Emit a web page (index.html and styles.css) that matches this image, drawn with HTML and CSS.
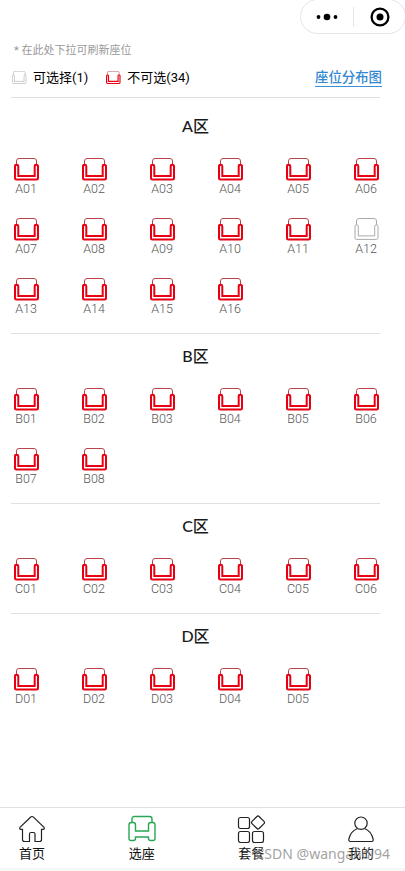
FILE: index.html
```
<!DOCTYPE html>
<html lang="zh-CN">

<head>
    <meta charset="UTF-8">
    <meta name="viewport" content="width=device-width, initial-scale=1.0">
    <title>选座</title>
    <link rel="stylesheet" href="styles.css">
</head>

<body>
    <svg class="sprite">
        <symbol id="seat" viewBox="0 0 26 24">
            <path class="seat-back" d="M3.500 7V3Q3.500 .5 6 .5H21Q23.500 .5 23.500 3V7" />
            <path class="seat-arm" d="M5.300 8.200V17.900H21.700V8.200Q21.700 6.800 23.400 6.800T25 8.200V19.900Q25 21.400 23.500 21.400H3.500Q2 21.400 2 19.900V8.200Q2 6.800 3.600 6.800T5.300 8.200Z" />
        </symbol>
    </svg>

    <div id="app">
        <div class="title-bar">
            <div class="capsule">
                <svg class="capsule-more" width="22" height="8" viewBox="0 0 22 8">
                    <circle cx="2.500" cy="4" r="1.900" />
                    <circle cx="11" cy="4" r="3.300" />
                    <circle cx="19.500" cy="4" r="1.900" />
                </svg>
                <span class="capsule-line"></span>
                <svg class="capsule-close" width="20" height="20" viewBox="0 0 20 20">
                    <circle class="ring" cx="10" cy="10" r="8.400" />
                    <circle cx="10" cy="10" r="3.500" />
                </svg>
            </div>
        </div>

        <div class="content">
            <div class="tip">* 在此处下拉可刷新座位</div>
            <div class="legend">
                <svg class="legend-icon free"><use href="#seat" /></svg>
                <span class="legend-text">可选择(1)</span>
                <svg class="legend-icon taken"><use href="#seat" /></svg>
                <span class="legend-text">不可选(34)</span>
                <a class="map-link">座位分布图</a>
            </div>
            <div id="zones"></div>
        </div>

        <div class="tab-bar">
            <div class="tab">
                <svg width="28" height="28" viewBox="0 0 28 28">
                    <path d="M14 1.500Q14.800 1.500 15.500 2.200L26 12.300Q27 14 25 14.300H23.500V24.500Q23.500 26.500 21.500 26.500H17V19Q17 17.500 15.500 17.500H13Q11.500 17.500 11.500 19V26.500H6.500Q4.500 26.500 4.500 24.500V14.300H3Q1 14 2 12.300L12.500 2.200Q13.200 1.500 14 1.500Z" />
                </svg>
                <span>首页</span>
            </div>
            <div class="tab active">
                <svg width="28" height="28" viewBox="0 0 28 28">
                    <path d="M4 7.500V4Q4 1.500 6.500 1.500H21.500Q24 1.500 24 4V7.500" />
                    <path d="M7.500 16H20.500V10Q20.500 7.500 23 7.500H24.500Q27 7.500 27 10V23.500Q27 25.500 25 25.500H22.500Q20.500 25.500 20.500 23.500V22H7.500V23.500Q7.500 25.500 5.500 25.500H3Q1 25.500 1 23.500V10Q1 7.500 3.500 7.500H5Q7.500 7.500 7.500 10Z" />
                </svg>
                <span>选座</span>
            </div>
            <div class="tab">
                <svg width="28" height="28" viewBox="0 0 28 28">
                    <rect x="1.500" y="2.500" width="11" height="11" rx="2" />
                    <rect x="1.500" y="16.500" width="11" height="11" rx="2" />
                    <rect x="15.500" y="16.500" width="11" height="11" rx="2" />
                    <rect x="16" y="2.500" width="10" height="10" rx="1.500" transform="rotate(45 21 7.500)" />
                </svg>
                <span>套餐</span>
            </div>
            <div class="tab">
                <svg width="28" height="28" viewBox="0 0 28 28">
                    <circle cx="14" cy="8.200" r="6.200" />
                    <path d="M10.500 13.500Q4 16 2 23.500Q1.200 26.500 3.500 26.500H24.500Q26.800 26.500 26 23.500Q24 16 17.500 13.500" />
                </svg>
                <span>我的</span>
            </div>
            <div class="watermark">CSDN @wangandi94</div>
        </div>
    </div>

    <script src="seats.js"></script>
</body>

</html>
```
FILE: styles.css
```
body {
    margin: 0;
    background-color: #fff;
    color: #1a1a1a;
    font-family: Roboto, "Noto Sans CJK SC", sans-serif;
}

.sprite {
    position: absolute;
    width: 0;
    height: 0;
}

#app {
    display: flex;
    flex-direction: column;
    height: 100vh;
    overflow: hidden;
}

.title-bar {
    display: flex;
    justify-content: flex-end;
    height: 43px;
}

.capsule {
    display: flex;
    align-items: center;
    box-sizing: border-box;
    width: 106px;
    height: 35px;
    margin-top: -1px;
    margin-right: -1px;
    padding-left: 15px;
    border: 1px solid #e4e4e4;
    border-radius: 18px;
}

.capsule-line {
    width: 1px;
    height: 20px;
    margin: 0 16px 0 15px;
    background-color: #e6e6e6;
}

.capsule-close .ring {
    fill: none;
    stroke: #000;
    stroke-width: 2.3;
}

.content {
    flex: 1;
    padding: 0 25px 0 11px;
}

.tip {
    padding-left: 3px;
    font-size: 11px;
    line-height: 16px;
    color: #999;
}

.legend {
    display: flex;
    align-items: center;
    height: 38px;
    border-bottom: 1px solid #e0e0e0;
}

.legend-icon {
    width: 16px;
    height: 14px;
    margin: 0 6px 0 0;
}

.legend-text {
    margin-right: 17px;
    font-size: 13px;
    line-height: 18px;
    color: #000;
}

.map-link {
    margin: 0 -2px 0 auto;
    border-bottom: 1px solid #3a8fd6;
    font-size: 13.4px;
    font-weight: 500;
    line-height: 17px;
    color: #3388d0;
}

.zone {
    padding-bottom: 16px;
    border-bottom: 1px solid #e0e0e0;
}

.zone:first-child {
    padding-top: 6px;
}

.zone:last-child {
    border-bottom: none;
}

.zone-title {
    height: 24px;
    padding: 11px 0 19px;
    font-family: Lato, "Noto Sans CJK SC", sans-serif;
    font-size: 16px;
    font-weight: 500;
    line-height: 21px;
    text-align: center;
}

.seats {
    display: grid;
    grid-template-columns: repeat(6, 26px);
    column-gap: 42px;
    row-gap: 21px;
    padding-left: 2px;
}

.seat {
    display: flex;
    flex-direction: column;
    align-items: center;
    height: 39px;
    font-size: 12.5px;
    font-weight: 300;
    line-height: 15px;
    color: #555;
}

.seat-icon {
    width: 26px;
    height: 24px;
    margin-bottom: -1px;
    flex-shrink: 0;
}

.seat-back {
    fill: none;
    stroke: var(--back-color);
    stroke-width: 1;
}

.seat-arm {
    fill: none;
    stroke: var(--arm-color);
    stroke-width: var(--arm-width);
}

.taken {
    --back-color: #b8434a;
    --arm-color: #e60012;
    --arm-width: 2;
}

.free {
    --back-color: #aaa;
    --arm-color: #aaa;
    --arm-width: 1;
}

.tab-bar {
    position: relative;
    display: flex;
    justify-content: space-between;
    height: 60px;
    padding: 0 30px 0 18px;
    border-top: 1px solid #e0e0e0;
    border-bottom: 3px solid #f7f7f7;
}

.tab {
    display: flex;
    flex-direction: column;
    align-items: center;
    width: 28px;
    padding-top: 7px;
    font-size: 13px;
    line-height: 22px;
    color: #111;
    white-space: nowrap;
}

.tab svg {
    fill: none;
    stroke: #222;
    stroke-width: 1.2;
    flex-shrink: 0;
}

.tab.active svg {
    stroke: #29a653;
    stroke-width: 1.4;
}

.watermark {
    position: absolute;
    right: 15px;
    top: 36px;
    font-family: "Noto Sans", sans-serif;
    font-size: 14px;
    line-height: 20px;
    color: rgba(130, 130, 130, 0.75);
}
```
FILE: seats.js
```
const zones = [
    { name: 'A', count: 16 },
    { name: 'B', count: 8 },
    { name: 'C', count: 6 },
    { name: 'D', count: 5 }
];
const freeSeats = ['A12'];

function renderSeat(id) {
    const state = freeSeats.includes(id) ? 'free' : 'taken';
    return `<div class="seat ${state}">
        <svg class="seat-icon"><use href="#seat" /></svg>
        <span>${id}</span>
    </div>`;
}

document.getElementById('zones').innerHTML = zones.map(zone => {
    let seats = '';
    for (let i = 1; i <= zone.count; i++) {
        seats += renderSeat(zone.name + String(i).padStart(2, '0'));
    }
    return `<div class="zone">
        <div class="zone-title">${zone.name}区</div>
        <div class="seats">${seats}</div>
    </div>`;
}).join('');
```
